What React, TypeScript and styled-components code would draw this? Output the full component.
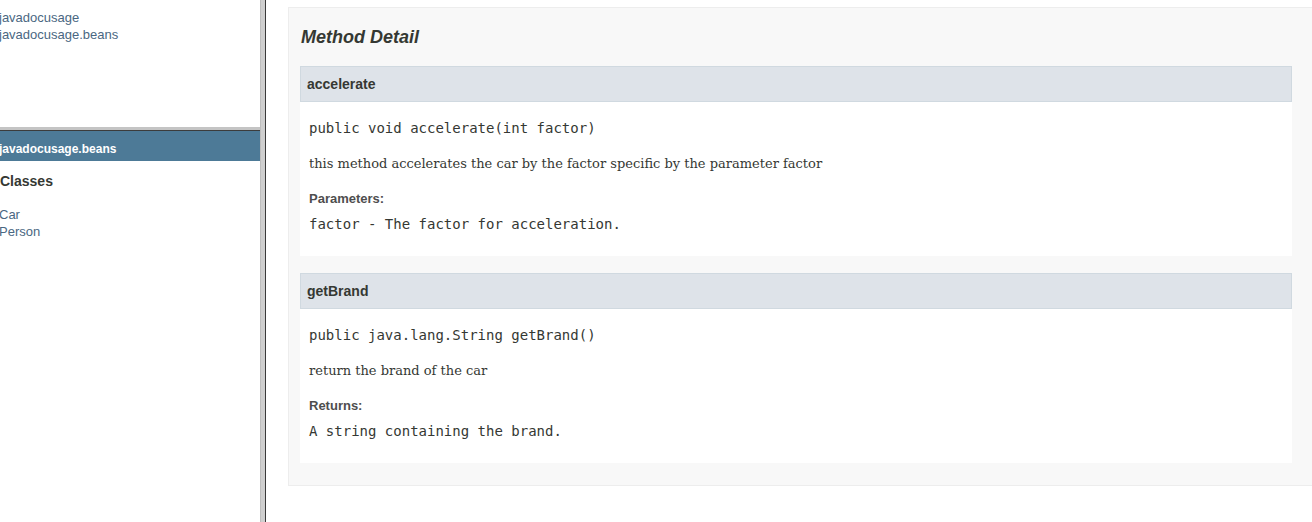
import styled, { createGlobalStyle } from "styled-components";

const GlobalStyle = createGlobalStyle`
  html, body {
    margin: 0;
    padding: 0;
    background: #ffffff;
  }
  body {
    font-family: "Liberation Sans", Arial, sans-serif;
    color: #353833;
  }
`;

type Method = {
  name: string;
  signature: string;
  description: string;
  tagLabel: string;
  tagText: string;
};

const methods: Method[] = [
  {
    name: "accelerate",
    signature: "public void accelerate(int factor)",
    description:
      "this method accelerates the car by the factor specific by the parameter factor",
    tagLabel: "Parameters:",
    tagText: "factor - The factor for acceleration.",
  },
  {
    name: "getBrand",
    signature: "public java.lang.String getBrand()",
    description: "return the brand of the car",
    tagLabel: "Returns:",
    tagText: "A string containing the brand.",
  },
];

export default function App() {
  return (
    <>
      <GlobalStyle />
      <Page>
        <LeftPane>
          <PackagesFrame>
            <LinkList>
              <li>javadocusage</li>
              <li>javadocusage.beans</li>
            </LinkList>
          </PackagesFrame>
          <HDivider />
          <ClassesFrame>
            <Bar>javadocusage.beans</Bar>
            <IndexTitle>Classes</IndexTitle>
            <LinkList>
              <li>Car</li>
              <li>Person</li>
            </LinkList>
          </ClassesFrame>
        </LeftPane>
        <VDivider />
        <RightPane>
          <DetailBox>
            <SectionTitle>Method Detail</SectionTitle>
            <MethodList>
              {methods.map((m) => (
                <MethodBlock key={m.name}>
                  <MethodHeader>{m.name}</MethodHeader>
                  <MethodBody>
                    <Signature>{m.signature}</Signature>
                    <Description>{m.description}</Description>
                    <TagLabel>{m.tagLabel}</TagLabel>
                    <TagText>{m.tagText}</TagText>
                  </MethodBody>
                </MethodBlock>
              ))}
            </MethodList>
          </DetailBox>
        </RightPane>
      </Page>
    </>
  );
}

const Page = styled.div`
  display: flex;
  width: 1312px;
  height: 522px;
  overflow: hidden;
`;

const LeftPane = styled.div`
  width: 260px;
  display: flex;
  flex-direction: column;
  background: #ffffff;
`;

const PackagesFrame = styled.div`
  height: 127px;
  padding-top: 9px;
  box-sizing: border-box;
`;

const LinkList = styled.ul`
  list-style: none;
  margin: 0;
  padding: 0;
  font-size: 13px;
  line-height: 17px;
  color: #4a6782;
  li {
    margin-left: -1px;
  }
`;

const HDivider = styled.div`
  height: 4px;
  background: #c4c4c4;
  border-bottom: 1px solid #3c3c3c;
  box-sizing: border-box;
`;

const ClassesFrame = styled.div`
  flex: 1;
`;

const Bar = styled.div`
  background: #4d7a97;
  color: #ffffff;
  font-weight: bold;
  font-size: 12px;
  line-height: 14px;
  padding: 11px 0 5px 0;
  margin-left: -1px;
`;

const IndexTitle = styled.div`
  font-weight: bold;
  font-size: 14px;
  line-height: 16px;
  color: #353833;
  padding: 12px 0 0 0;
  margin-bottom: 17px;
`;

const VDivider = styled.div`
  width: 6px;
  background: #cfcfcf;
  border-left: 1px solid #bdbdbd;
  border-right: 1px solid #3a3a3a;
  box-sizing: border-box;
`;

const RightPane = styled.div`
  flex: 1;
  padding: 7px 0 0 22px;
  overflow: hidden;
`;

const DetailBox = styled.div`
  background: #f8f8f8;
  border: 1px solid #ededed;
  border-right: none;
  padding: 0 20px 22px 11px;
`;

const SectionTitle = styled.h3`
  margin: 19px 0 18px 1px;
  font-size: 18px;
  line-height: 21px;
  font-style: italic;
  font-weight: bold;
  color: #353833;
`;

const MethodList = styled.div`
  display: flex;
  flex-direction: column;
  gap: 17px;
`;

const MethodBlock = styled.div`
  background: #ffffff;
`;

const MethodHeader = styled.h4`
  margin: 0;
  background: #dee3e9;
  border: 1px solid #d0d9e0;
  padding: 9px 6px 9px 6px;
  font-size: 14px;
  line-height: 16px;
  font-weight: bold;
  color: #353833;
`;

const MethodBody = styled.div`
  padding: 16px 9px 22px 9px;
`;

const Signature = styled.div`
  font-family: "DejaVu Sans Mono", "Liberation Mono", monospace;
  font-size: 14px;
  line-height: 20px;
  color: #353833;
`;

const Description = styled.div`
  margin-top: 16px;
  font-family: "DejaVu Serif", "Liberation Serif", serif;
  font-size: 13px;
  line-height: 20px;
  color: #353833;
`;

const TagLabel = styled.div`
  margin-top: 17px;
  font-size: 13px;
  line-height: 16px;
  font-weight: bold;
  color: #4e4e4e;
`;

const TagText = styled.div`
  margin-top: 7px;
  font-family: "DejaVu Sans Mono", "Liberation Mono", monospace;
  font-size: 14px;
  line-height: 20px;
  color: #353833;
`;
